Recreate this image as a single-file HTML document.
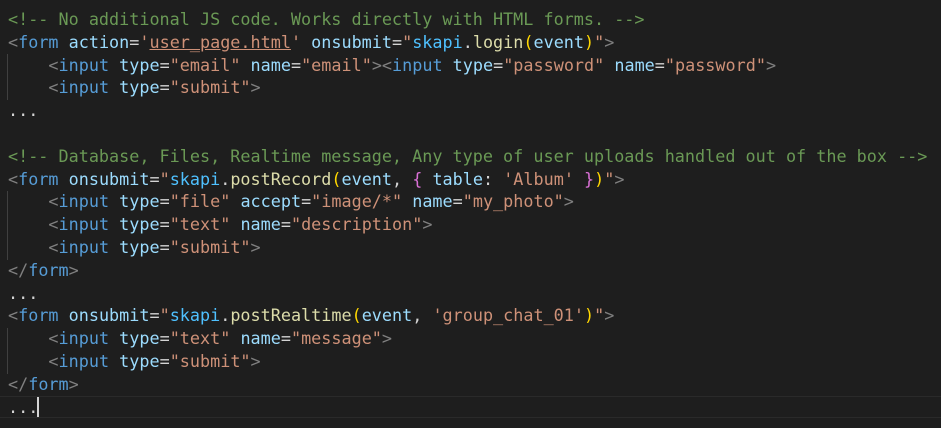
<!DOCTYPE html>
<html><head><meta charset="utf-8"><style>
html,body{margin:0;padding:0;background:#1e1e1e;width:941px;height:428px;overflow:hidden}
pre{margin:0;position:absolute;left:8px;top:8px;font-family:"DejaVu Sans Mono","Liberation Mono",monospace;font-size:16.8px;line-height:22.8px;color:#d4d4d4;white-space:pre}
.c{color:#6a9955}.p{color:#808080}.t{color:#569cd6}.a{color:#9cdcfe}.s{color:#ce9178}
.v{color:#4fc1ff}.f{color:#dcdcaa}.y{color:#ffd700}.m{color:#da70d6}
.u{text-decoration:underline;text-decoration-color:#ce9178}
.g{position:absolute;left:7px;width:1px;background:#404040}
.cur{position:absolute;left:0;width:941px;top:396px;height:22px;border-top:1px solid #2a2a2a;border-bottom:1px solid #2a2a2a;box-sizing:border-box}
.caret{position:absolute;left:37px;top:397px;width:2px;height:20px;background:#d4d4d4}
</style></head><body>
<div class="g" style="top:54px;height:46px"></div>
<div class="g" style="top:191px;height:69px"></div>
<div class="g" style="top:328px;height:46px"></div>
<div class="cur"></div>
<pre><span class="c">&lt;!-- No additional JS code. Works directly with HTML forms. --&gt;</span>
<span class="p">&lt;</span><span class="t">form</span> <span class="a">action</span>=<span class="s">'<span class="u">user_page.html</span>'</span> <span class="a">onsubmit</span>=<span class="s">"</span><span class="v">skapi</span>.<span class="f">login</span><span class="y">(</span><span class="a">event</span><span class="y">)</span><span class="s">"</span><span class="p">&gt;</span>
    <span class="p">&lt;</span><span class="t">input</span> <span class="a">type</span>=<span class="s">"email"</span> <span class="a">name</span>=<span class="s">"email"</span><span class="p">&gt;&lt;</span><span class="t">input</span> <span class="a">type</span>=<span class="s">"password"</span> <span class="a">name</span>=<span class="s">"password"</span><span class="p">&gt;</span>
    <span class="p">&lt;</span><span class="t">input</span> <span class="a">type</span>=<span class="s">"submit"</span><span class="p">&gt;</span>
...

<span class="c">&lt;!-- Database, Files, Realtime message, Any type of user uploads handled out of the box --&gt;</span>
<span class="p">&lt;</span><span class="t">form</span> <span class="a">onsubmit</span>=<span class="s">"</span><span class="v">skapi</span>.<span class="f">postRecord</span><span class="y">(</span><span class="a">event</span>, <span class="m">{</span> <span class="a">table</span>: <span class="s">'Album'</span> <span class="m">}</span><span class="y">)</span><span class="s">"</span><span class="p">&gt;</span>
    <span class="p">&lt;</span><span class="t">input</span> <span class="a">type</span>=<span class="s">"file"</span> <span class="a">accept</span>=<span class="s">"image/*"</span> <span class="a">name</span>=<span class="s">"my_photo"</span><span class="p">&gt;</span>
    <span class="p">&lt;</span><span class="t">input</span> <span class="a">type</span>=<span class="s">"text"</span> <span class="a">name</span>=<span class="s">"description"</span><span class="p">&gt;</span>
    <span class="p">&lt;</span><span class="t">input</span> <span class="a">type</span>=<span class="s">"submit"</span><span class="p">&gt;</span>
<span class="p">&lt;/</span><span class="t">form</span><span class="p">&gt;</span>
...
<span class="p">&lt;</span><span class="t">form</span> <span class="a">onsubmit</span>=<span class="s">"</span><span class="v">skapi</span>.<span class="f">postRealtime</span><span class="y">(</span><span class="a">event</span>, <span class="s">'group_chat_01'</span><span class="y">)</span><span class="s">"</span><span class="p">&gt;</span>
    <span class="p">&lt;</span><span class="t">input</span> <span class="a">type</span>=<span class="s">"text"</span> <span class="a">name</span>=<span class="s">"message"</span><span class="p">&gt;</span>
    <span class="p">&lt;</span><span class="t">input</span> <span class="a">type</span>=<span class="s">"submit"</span><span class="p">&gt;</span>
<span class="p">&lt;/</span><span class="t">form</span><span class="p">&gt;</span>
...</pre>
<div class="caret"></div>
</body></html>
